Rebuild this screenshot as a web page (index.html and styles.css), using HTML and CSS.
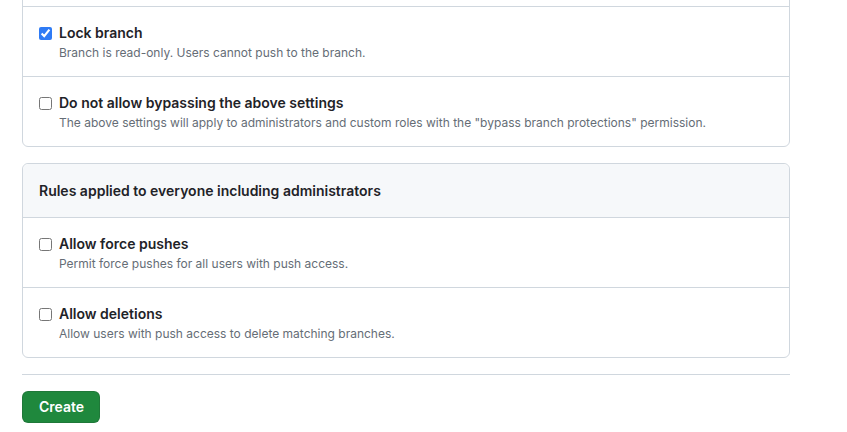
FILE: index.html
```html
<!DOCTYPE html>
<html lang="en">
<head>
<meta charset="utf-8">
<title>Branch protection rule</title>
<link rel="stylesheet" href="styles.css">
</head>
<body>
<main class="page">
  <section class="box box--clipped">
    <div class="row row--tail"></div>
    <div class="row">
      <label class="check">
        <input type="checkbox" checked>
        <span class="check__text">
          <span class="check__title">Lock branch</span>
          <span class="check__note">Branch is read-only. Users cannot push to the branch.</span>
        </span>
      </label>
    </div>
    <div class="row">
      <label class="check">
        <input type="checkbox">
        <span class="check__text">
          <span class="check__title">Do not allow bypassing the above settings</span>
          <span class="check__note">The above settings will apply to administrators and custom roles with the "bypass branch protections" permission.</span>
        </span>
      </label>
    </div>
  </section>

  <section class="box">
    <header class="box__header">Rules applied to everyone including administrators</header>
    <div class="row">
      <label class="check">
        <input type="checkbox">
        <span class="check__text">
          <span class="check__title">Allow force pushes</span>
          <span class="check__note">Permit force pushes for all users with push access.</span>
        </span>
      </label>
    </div>
    <div class="row">
      <label class="check">
        <input type="checkbox">
        <span class="check__text">
          <span class="check__title">Allow deletions</span>
          <span class="check__note">Allow users with push access to delete matching branches.</span>
        </span>
      </label>
    </div>
  </section>

  <hr class="divider">
  <button class="btn-primary" type="button">Create</button>
</main>
</body>
</html>
```

FILE: styles.css
```css
* { box-sizing: border-box; }
html, body { margin: 0; background: #ffffff; }
body {
  font-family: Inter, "Liberation Sans", Arial, sans-serif;
  color: #1f2328;
  font-size: 14px;
  line-height: 21px;
}
.page {
  width: 768px;
  margin-left: 22px;
  display: flex;
  flex-direction: column;
  align-items: flex-start;
}
.box {
  width: 100%;
  border: 1px solid #d0d7de;
  border-radius: 6px;
  margin-bottom: 16px;
}
.box--clipped {
  margin-top: -20px;
}
.box__header {
  background: #f6f8fa;
  padding: 16px;
  font-weight: 600;
  border-bottom: 1px solid #d0d7de;
  border-radius: 6px 6px 0 0;
}
.row {
  padding: 16px 16px 14px;
  border-top: 1px solid #d0d7de;
}
.row--tail {
  border-top: 0;
  padding: 0;
  height: 25px;
}
.box__header + .row { border-top: 0; }
.check {
  display: flex;
  align-items: flex-start;
  gap: 7px;
}
.check input {
  width: 13px;
  height: 13px;
  margin: 4px 0 0 0;
  flex: none;
  accent-color: #2f7bf5;
}
.check__text {
  display: flex;
  flex-direction: column;
}
.check__title {
  font-weight: 600;
  line-height: 20px;
}
.check__note {
  font-size: 12px;
  line-height: 18px;
  margin-top: 1px;
  color: #656d76;
}
.divider {
  width: 100%;
  margin: 0 0 16px;
  border: 0;
  border-top: 1px solid #d0d7de;
  height: 0;
}
.btn-primary {
  font-family: inherit;
  font-size: 14px;
  font-weight: 600;
  line-height: 20px;
  color: #ffffff;
  background: #1f883d;
  border: 1px solid rgba(31, 35, 40, 0.15);
  border-radius: 6px;
  padding: 5px 16px;
  height: 32px;
  width: 78px;
}
```
